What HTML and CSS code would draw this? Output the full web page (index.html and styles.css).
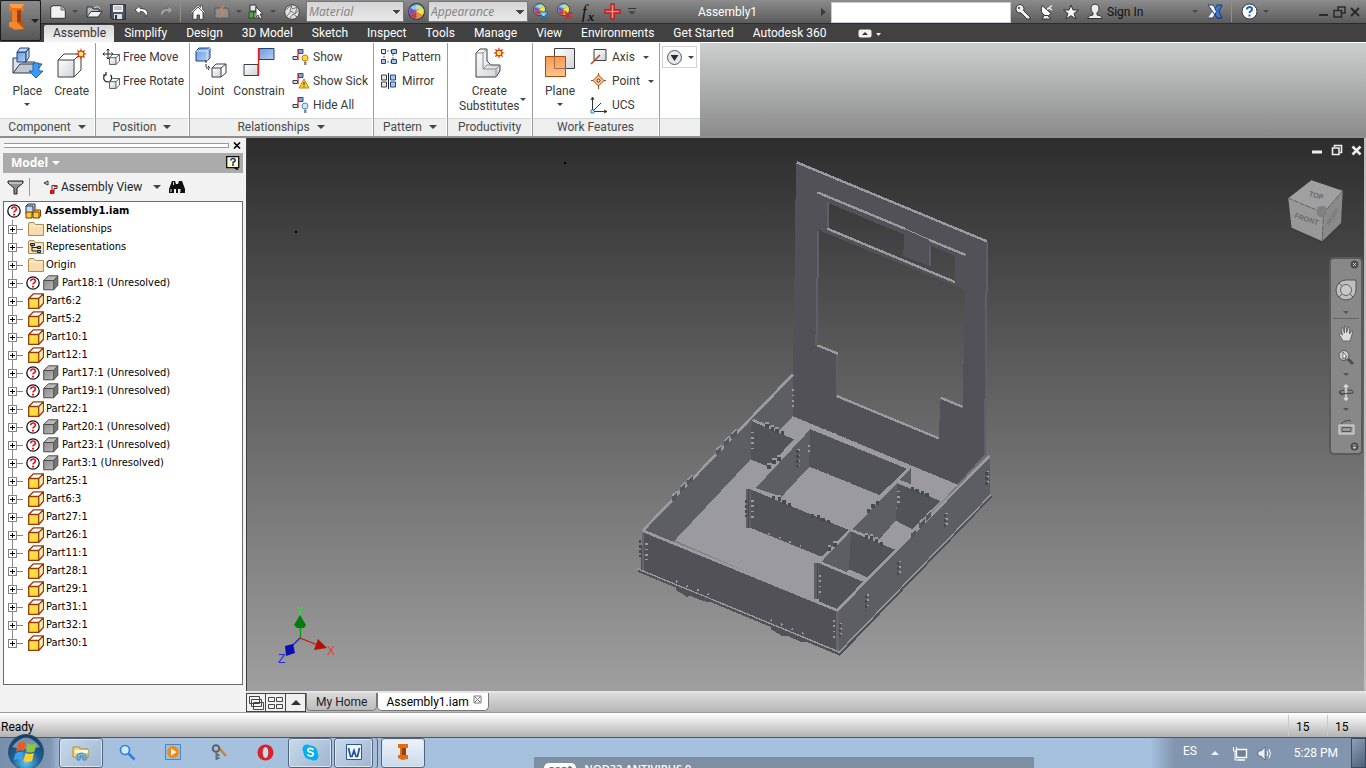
FILE: index.html
```html
<!DOCTYPE html>
<html lang="en">
<head>
<meta charset="utf-8">
<title>Assembly1</title>
<link rel="stylesheet" href="styles.css">
</head>
<body>
<svg class="defs" aria-hidden="true">
  <defs>
    <linearGradient id="gGold" x1="0" y1="0" x2="1" y2="1"><stop offset="0" stop-color="#ffe95c"/><stop offset="1" stop-color="#fbd226"/></linearGradient>
    <linearGradient id="gGrey" x1="0" y1="0" x2="1" y2="1"><stop offset="0" stop-color="#8f8f8f"/><stop offset="1" stop-color="#b5b5b5"/></linearGradient>
    <linearGradient id="gBlue" x1="0" y1="0" x2="1" y2="1"><stop offset="0" stop-color="#6c9bdc"/><stop offset="1" stop-color="#b4cff2"/></linearGradient>
    <linearGradient id="gPale" x1="0" y1="0" x2="1" y2="1"><stop offset="0" stop-color="#ffffff"/><stop offset="1" stop-color="#cfd3d8"/></linearGradient>
    <linearGradient id="gOrange" x1="0" y1="0" x2="0" y2="1"><stop offset="0" stop-color="#f79a55"/><stop offset="1" stop-color="#fbc48c"/></linearGradient>
    <symbol id="part" viewBox="0 0 16 16"><path d="M.7 5.500h10v10H.7z" fill="url(#gGold)"/><path d="M.7 5.500 5.500.8h10l-4.800 4.700z" fill="#fff"/><path d="m10.700 5.500 4.800-4.700v9.500l-4.800 5.200z" fill="#fbeeb4"/><path d="M.7 5.500h10v10H.7zL5.500.8h10v9.500l-4.800 5.200M10.700 5.500 15.500.8" fill="none" stroke="#963b08" stroke-width="1.300" stroke-linejoin="round"/></symbol>
    <symbol id="lost" viewBox="0 0 16 16"><path d="M.7 5.500h10v9.300H.7z" fill="url(#gGrey)"/><path d="M.7 5.500 5.500.8h9.300l-4.100 4.700z" fill="#b9b9b9"/><path d="m10.700 5.500 4.100-4.700v9.500l-4.100 4.500z" fill="#777"/><path d="M.7 5.500 5.500.8h9.300v9.500l-4.100 4.500H.7zh10v9.300m0-9.300 4.100-4.700" fill="none" stroke="#4b4b4b"/></symbol>
    <symbol id="query" viewBox="0 0 14 14"><circle cx="7" cy="7" r="6.200" fill="#fff" stroke="#111" stroke-width="1.300"/><path d="M4.600 5.200Q5 3 7.100 3t2.300 2Q9.400 6.300 8 7 7 7.500 7 8.600" fill="none" stroke="#e8131b" stroke-width="1.700"/><path d="M6 9.800h2v1.800H6z" fill="#e8131b"/></symbol>
    <symbol id="folder" viewBox="0 0 16 14"><path d="M.5 13.500V2Q.5.500 2 .500h4l1.500 2h8v11z" fill="#f6dcae" stroke="#b08a55"/><path d="M1.500 4h13" stroke="#fff3da"/></symbol>
    <symbol id="wheel" viewBox="0 0 18 18"><circle cx="9" cy="9" r="8.300" fill="#ddd" stroke="#26324a" stroke-width="1.200"/><path d="M9 9V1.500A7.500 7.500 0 0 1 15.500 5.200z" fill="#8cc63f"/><path d="M9 9l6.500-3.800a7.500 7.500 0 0 1 0 7.600z" fill="#f5e63c"/><path d="M9 9l6.500 3.800A7.500 7.500 0 0 1 9 16.500z" fill="#f08a2c"/><path d="M9 9v7.500a7.500 7.500 0 0 1-6.500-3.700z" fill="#d8342e"/><path d="M9 9l-6.500 3.800a7.500 7.500 0 0 1 0-7.600z" fill="#7a4fb5"/><path d="M9 9 2.500 5.200A7.500 7.500 0 0 1 9 1.500z" fill="#3f8fd8"/><path d="M3 5q6-5 12 0-2 2-6 2T3 5z" fill="#fff" opacity=".5"/></symbol>
    <symbol id="cube" viewBox="0 0 12 12"><path d="M.6 4h7v7.400h-7z" fill="url(#gPale)"/><path d="M.6 4 3.700.6h7.700v7.200L7.600 11.400h-7zh7v7.400M7.600 4 11.400.6" fill="none" stroke="#4a5058"/></symbol>
    <symbol id="rel" viewBox="0 0 16 16"><path d="M6.500 1.500H11v4H6.500z" fill="#7fa6dd" stroke="#274a86"/><path d="M1 8.500h4.500v3H1z" fill="#dde1e6" stroke="#333c4a"/><path d="M6 1v11" stroke="#e22" stroke-width="1.300"/></symbol>
    <symbol id="burst" viewBox="0 0 12 12"><path d="m6 0 1 3 3-1-1 3 3 1-3 1 1 3-3-1-1 3-1-3-3 1 1-3-3-1 3-1-1-3 3 1z" fill="#d2401a"/><circle cx="6" cy="6" r="2.300" fill="#ffee6a"/></symbol>
    <g id="tooth"><path d="M0 0h10v18H0z" fill="#494a4e"/><path d="M0 0h10v6H0z" fill="#9b9a9f"/></g>
    <g id="bump"><path d="M0 8 16-6v20L4 26H0z" fill="#54555a"/><path d="m-2 8 16-14h6L5 10z" fill="#9b9a9f"/></g>
  </defs>
</svg>

<div class="app">
  <header class="head">
    <button class="app-btn" aria-label="Application menu">
      <svg width="17" height="26" viewBox="0 0 17 26"><path d="M1 0h15v7h-3v11h3v7l-9 1-6-3v-5h3V7H1z" fill="#e9731d"/><path d="M1 0h15l-3 4H4z" fill="#f8a04b"/><path d="M9 6h4v12H9z" fill="#a23c12"/><path d="M1 18h8l7 7H7l-6-3z" fill="#f08a2c"/><path d="M4 7h5v11H4z" fill="#ef7d24"/><path d="m9 18 7 0v7z" fill="#c2500f"/></svg>
      <span class="tri big"></span>
    </button>
    <div class="head-rows">
      <div class="title">
        <button class="ic w24" aria-label="New"><svg width="16" height="14" viewBox="0 0 16 14"><path d="M.7 13.300V2L3 .700h8.500l3.800 4v8.600z" fill="#f2f2f2" stroke="#333"/><path d="M11 1v4h4" fill="#bbb" stroke="#666"/></svg></button>
        <button class="ic w10" aria-label="New options"><span class="tri"></span></button>
        <button class="ic w28" aria-label="Open"><svg width="17" height="13" viewBox="0 0 17 13"><path d="M1 12V2h5l1 2h6v3" fill="#b9bec4" stroke="#333"/><path d="M1 12 5 6.500h11L12 12z" fill="#eef0f2" stroke="#333"/><path d="M8 3q4-3 6 1" fill="none" stroke="#ddd"/></svg></button>
        <button class="ic w20" aria-label="Save"><svg width="16" height="16" viewBox="0 0 16 16"><path d="M.7.700h14.600v14.600H2L.7 14z" fill="#4b5563" stroke="#222a35"/><path d="M3 1h10v7H3z" fill="#f5f5f5"/><path d="M4 3h8M4 5h8" stroke="#999"/><path d="M4 10h8v5H4z" fill="#dcdfe3"/><path d="M5 11h2v4H5z" fill="#333"/></svg></button>
        <button class="ic w28" aria-label="Undo"><svg width="16" height="13" viewBox="0 0 16 13"><path d="M6 .8 1 5l5 4.200V6.500q5-.7 6 5.500 5-8-6-8.600z" fill="#fff" stroke="#333" stroke-width=".8"/></svg></button>
        <button class="ic w20" aria-label="Redo"><svg width="16" height="13" viewBox="0 0 16 13"><path d="m10 .8 5 4.200-5 4.200V6.500q-5-.7-6 5.500-5-8 6-8.600z" fill="#a2a2a2" stroke="#666" stroke-width=".8"/></svg></button>
        <span class="w10 vsep"></span>
        <button class="ic w24" aria-label="Home"><svg width="16" height="16" viewBox="0 0 16 16"><path d="M3 8v7.300h4V11h2.500v4.300H13V8L8 3z" fill="#f7f7f7" stroke="#333" stroke-width=".8"/><path d="m.8 8.300 7.200-7 2.500 2.300V1.500h2v4l2.700 2.700-1 1L8 3 1.800 9.300z" fill="#fff" stroke="#333" stroke-width=".7"/></svg></button>
        <button class="ic w24" aria-label="Update"><svg width="16" height="14" viewBox="0 0 16 14"><path d="M1 3h12l2 3v7H1z" fill="#8d8d8d" stroke="#5b5b5b"/><path d="m9 0-6 7h5l-3 7 8-9H8l3-5z" fill="#b58a66"/></svg></button>
        <button class="ic w10" aria-label="Update options"><span class="tri"></span></button>
        <button class="ic w24" aria-label="Select"><svg width="16" height="16" viewBox="0 0 16 16"><path d="M2 1h6v6H2z" fill="#e6e8ea" stroke="#333"/><path d="M1 8h5v6H1z" fill="#4fae3c" stroke="#1d5a18"/><path d="M6 8h5v6H6z" fill="#d5d8db" stroke="#333"/><path d="m8 3 7 7h-3l2 4-2 1-2-4-2 2z" fill="#fff" stroke="#222" stroke-width=".8"/></svg></button>
        <button class="ic w10" aria-label="Select options"><span class="tri"></span></button>
        <button class="ic w28" aria-label="Material browser"><svg width="16" height="16" viewBox="0 0 16 16"><circle cx="8" cy="8" r="7.300" fill="#e2e2e2" stroke="#444"/><path d="m2 6 4-4 3 3 4-2M3 12l4-5 4 3 3-3M6 14l3-4 4 3M8 1l-2 6M11 10l2-6" fill="none" stroke="#777"/></svg></button>
        <select class="combo" aria-label="Material"><option>Material</option></select>
        <button class="ic w24" aria-label="Appearance browser"><svg width="17" height="17"><use href="#wheel"/></svg></button>
        <select class="combo wide" aria-label="Appearance"><option>Appearance</option></select>
        <button class="ic w24" aria-label="Adjust"><svg width="17" height="17" viewBox="0 0 17 17"><use href="#wheel" width="13" height="13" x="1" y="0"/><path d="M7 9h9l-3.500 4.500h-2zM8 16h7" fill="#8fd4fa" stroke="#0f6aa5"/></svg></button>
        <button class="ic w24" aria-label="Clear appearance"><svg width="17" height="17" viewBox="0 0 17 17"><use href="#wheel" width="13" height="13" x="1" y="0"/><path d="m9 9 7 7m0-7-7 7" stroke="#e02020" stroke-width="1.600"/></svg></button>
        <button class="ic w24 fx" aria-label="Parameters"><i>f</i><sub>x</sub></button>
        <button class="ic w24" aria-label="Measure"><svg width="17" height="17" viewBox="0 0 17 17"><path d="M7 1h3v6h6v3h-6v6H7v-6H1V7h6z" fill="#ff8a80" stroke="#c01818" stroke-width="1.300"/></svg></button>
        <button class="ic w16 more" aria-label="Customize"><span class="bar"></span><span class="tri big"></span></button>
        <h1>Assembly1</h1>
        <button class="ic w16" aria-label="Expand search"><span class="tri-r"></span></button>
        <input class="search" type="text" aria-label="Search">
        <button class="ic w24" aria-label="Key"><svg width="16" height="16" viewBox="0 0 16 16"><path d="M1 5a4 4 0 1 1 7.500 1.500L15 13v2h-3L6 9Q1 9 1 5z" fill="#eee" stroke="#333"/><circle cx="4" cy="4" r="1" fill="#333"/></svg></button>
        <button class="ic w24" aria-label="Communication"><svg width="14" height="16" viewBox="0 0 14 16"><path d="m7 11 4 4H2l3-5z" fill="#eee" stroke="#333"/><path d="M2 1.500Q-.5 9 5 11.500q4 1 6-2z" fill="#fff" stroke="#333"/><path d="m7 5.500 5-4M9 4l3 2" stroke="#eee" stroke-width="1.500"/></svg></button>
        <button class="ic w24" aria-label="Favorites"><svg width="16" height="16" viewBox="0 0 16 16"><path d="m8 1 2 5h5.500L11 9.500l2 5.500-5-3.300L3 15l2-5.500L.5 6H6z" fill="#f6f6f6" stroke="#333"/></svg></button>
        <button class="ic w24" aria-label="Account"><svg width="16" height="17" viewBox="0 0 16 17"><path d="M1 15.500q0-3 5-3.500V10Q3.500 8 4 4q1-3 4-3t4 3q.5 4-2 6v2q5 .5 5 3.500z" fill="#ececec" stroke="#333"/></svg></button>
        <button class="sign">Sign In</button>
        <button class="ic w16" aria-label="Sign in options"><span class="tri"></span></button>
        <button class="ic w24" aria-label="Exchange"><svg width="16" height="15" viewBox="0 0 16 15"><path d="M15 1h-5L1 14h5z" fill="#eef4ff"/><path d="M1 1h5l9 13h-5z" fill="#eef4ff" stroke="#1d3f7a"/><path d="M15 1h-5L8 5l1.500 2.500L8 10l2 4h5l-3-6.500z" fill="#3c78c8" stroke="#16386e"/><path d="M1 14h5l2-4" fill="none" stroke="#1d3f7a"/></svg></button>
        <span class="w10 vsep"></span>
        <button class="ic w24" aria-label="Help"><svg width="17" height="17" viewBox="0 0 17 17"><circle cx="8.500" cy="8.500" r="7.500" fill="#fff" stroke="#333"/><path d="M6 6.500Q6 4 8.500 4t2.500 2.200Q11 7.500 9.500 8.300q-1 .7-1 1.700" fill="none" stroke="#1765c0" stroke-width="2"/><path d="M7.500 11.500h2v2h-2z" fill="#1765c0"/></svg></button>
        <button class="ic w10" aria-label="Help options"><span class="tri"></span></button>
        <span class="gap44"></span>
        <button class="ic w16" aria-label="Minimize"><svg width="11" height="12"><path d="M1 9h9" stroke="#2a2a2a" stroke-width="2"/></svg></button>
        <button class="ic w16" aria-label="Restore"><svg width="13" height="12" viewBox="0 0 13 12"><path d="M5 4V1h7v6H9M1 4.500h7.500V11H1z" fill="none" stroke="#2a2a2a" stroke-width="1.500"/></svg></button>
        <button class="ic w16" aria-label="Close"><svg width="10" height="10"><path d="m1 1 8 8m0-8L1 9" stroke="#2a2a2a" stroke-width="2"/></svg></button>
      </div>
      <nav class="tabs">
        <a class="on" href="#">Assemble</a><a href="#">Simplify</a><a href="#">Design</a><a href="#">3D Model</a><a href="#">Sketch</a><a href="#">Inspect</a><a href="#">Tools</a><a href="#">Manage</a><a href="#">View</a><a href="#">Environments</a><a href="#">Get Started</a><a href="#">Autodesk 360</a>
        <button class="mini" aria-label="Minimize ribbon"><svg width="24" height="9" viewBox="0 0 24 9"><rect x=".5" y=".5" width="13" height="8" rx="2" fill="#f2f2f2"/><path d="M4 6h6L7 3z" fill="#333"/><path d="M18 4h5l-2.500 3z" fill="#eee"/></svg></button>
      </nav>
    </div>
  </header>

  <section class="ribbon" aria-label="Ribbon">
    <div class="panel p-comp">
      <div class="body">
        <button class="big"><svg width="32" height="32" viewBox="0 0 32 32"><path d="M2 26V11h8l2 4h12v3" fill="#dfe2e6" stroke="#28394f"/><path d="M2 26 9 17h22l-7 9z" fill="#c3c7cc" stroke="#28394f"/><path d="M6 5h9v10H6z" fill="url(#gBlue)" stroke="#1f4580"/><path d="m6 5 3-4h9l-3 4zM15 5l3-4v9l-3 5z" fill="#c5d9f3" stroke="#1f4580"/><path d="M22 16h6v8h4l-7 7-7-7h4z" fill="#3b9af5" stroke="#1466b8"/></svg><span>Place</span><span class="tri dark"></span></button>
        <button class="big"><svg width="32" height="32" viewBox="0 0 32 32"><path d="M2 13h16v17H2z" fill="url(#gPale)"/><path d="M2 13 8 7h17v16l-7 7H2zh16v17m0-17 6-6" fill="none" stroke="#3a3f45" stroke-linejoin="round"/><use href="#burst" x="19" y="1" width="12" height="12"/></svg><span>Create</span></button>
      </div>
      <footer>Component<span class="tri big dark"></span></footer>
    </div>
    <div class="panel p-pos">
      <div class="body col">
        <button class="row"><svg width="18" height="18" viewBox="0 0 18 18"><path d="M6 1v10M1 6h10M4.500 2.500 6 1l1.500 1.500M4.500 9.500 6 11l1.500-1.500M2.500 4.500 1 6l1.500 1.500M9.500 4.500 11 6 9.500 7.500" fill="none" stroke="#222"/><use href="#cube" x="7" y="6" width="11" height="11"/></svg>Free Move</button>
        <button class="row"><svg width="18" height="18" viewBox="0 0 18 18"><path d="M3.500 2.500A4 4 0 1 0 8.500 3M4 0v3H1" fill="none" stroke="#222" stroke-width="1.200"/><use href="#cube" x="7" y="6" width="11" height="11"/></svg>Free Rotate</button>
      </div>
      <footer>Position<span class="tri big dark"></span></footer>
    </div>
    <div class="panel p-rel">
      <div class="body">
        <button class="big w42"><svg width="32" height="32" viewBox="0 0 32 32"><path d="M1 4 4 1h11v10l-3 3H1z" fill="url(#gBlue)" stroke="#1f4580"/><path d="M1 4h11v10m0-10 3-3" fill="none" stroke="#d6e5fa"/><path d="M11 13v8h4m-2-2 2 2-2 2" fill="none" stroke="#222" stroke-dasharray="3 1"/><path d="M17 21h9v9h-9z" fill="url(#gPale)"/><path d="m17 21 4-4h10v9l-5 4h-9zh9v9m0-9 5-4" fill="none" stroke="#3a3f45"/></svg><span>Joint</span></button>
        <button class="big w54"><svg width="32" height="32" viewBox="0 0 32 32"><path d="M16 1.500h15v11H16z" fill="url(#gBlue)" stroke="#1f4580"/><path d="M1 17.500h14v11H1z" fill="url(#gPale)" stroke="#3a3f45"/><path d="M15.500 1v28" stroke="#e81c1c" stroke-width="1.400"/></svg><span>Constrain</span></button>
        <div class="col">
          <button class="row"><svg width="18" height="18" viewBox="0 0 18 18"><use href="#rel" width="16" height="16"/><circle cx="13" cy="10" r="3" fill="#ffd83a" stroke="#c77a10"/><path d="M12 13.500h2.500V17H12z" fill="#888"/></svg>Show</button>
          <button class="row"><svg width="18" height="18" viewBox="0 0 18 18"><use href="#rel" width="16" height="16"/><path d="m12 7 5 9H7z" fill="#ffd21c" stroke="#c7820a"/><path d="M12 10v3m0 1v1" stroke="#222"/></svg>Show Sick</button>
          <button class="row"><svg width="18" height="18" viewBox="0 0 18 18"><use href="#rel" width="16" height="16"/><circle cx="13" cy="10" r="3" fill="#cfe6fa" stroke="#4b8ac4"/><path d="M12 13.500h2.500V17H12z" fill="#888"/></svg>Hide All</button>
        </div>
      </div>
      <footer>Relationships<span class="tri big dark"></span></footer>
    </div>
    <div class="panel p-pat">
      <div class="body col">
        <button class="row"><svg width="18" height="18" viewBox="0 0 18 18"><path d="M4 3h9v11H4z" fill="none" stroke="#666" stroke-dasharray="2 1"/><path d="M1.500 1.500h4v4h-4z" fill="#eee" stroke="#28394f"/><path d="M11.500 1.500h5v4h-5zM1.500 11.500h4v4h-4zM11.500 11.500h5v4h-5z" fill="#a9c6ee" stroke="#1f4580"/></svg>Pattern</button>
        <button class="row"><svg width="18" height="18" viewBox="0 0 18 18"><path d="M1.500 3h5v5h-5zM1.500 10h5v5h-5z" fill="#e6e8ea" stroke="#3a3f45"/><path d="M10.500 3h5v5h-5zM10.500 10h5v5h-5z" fill="#a9c6ee" stroke="#1f4580"/><path d="M8.500 1v16" stroke="#222"/></svg>Mirror</button>
      </div>
      <footer>Pattern<span class="tri big dark"></span></footer>
    </div>
    <div class="panel p-prod">
      <div class="body">
        <button class="big"><svg width="32" height="32" viewBox="0 0 32 32"><path d="M3 6 7 2h7v12l4 4h9v6l-4 6H3z" fill="url(#gPale)" stroke="#3a3f45"/><path d="M3 6h7v16h13v8M10 6l4-4M10 22l4-4h4M23 22l4-4" fill="none" stroke="#8b9096"/><use href="#burst" x="20" y="0" width="12" height="12"/></svg><span>Create<br>Substitutes</span></button>
        <span class="tri dark side"></span>
      </div>
      <footer>Productivity</footer>
    </div>
    <div class="panel p-work">
      <div class="body">
        <button class="big w54"><svg width="32" height="32" viewBox="0 0 32 32"><path d="M10.500 1.500h20v20h-20z" fill="url(#gPale)" stroke="#3a3f45"/><path d="M1.500 9.500h20v20h-20z" fill="url(#gOrange)" stroke="#a8480c"/><path d="M10.500 9.500v12h11" fill="none" stroke="#a3704a"/></svg><span>Plane</span><span class="tri dark"></span></button>
        <div class="col">
          <button class="row"><svg width="18" height="18" viewBox="0 0 18 18"><path d="M4 1.500h12v11H4z" fill="url(#gPale)" stroke="#3a3f45"/><path d="m1 16 9-9" stroke="#a8480c" stroke-width="1.500"/></svg>Axis<span class="tri dark"></span></button>
          <button class="row"><svg width="18" height="18" viewBox="0 0 18 18"><path d="M8.500 1v16M1 8.500h15" stroke="#a8480c"/><path d="m8.500 3 5.500 5.500L8.500 14 3 8.500z" fill="#fbc48c" stroke="#a8480c"/><circle cx="8.500" cy="8.500" r="1.500" fill="#fff" stroke="#333"/></svg>Point<span class="tri dark"></span></button>
          <button class="row"><svg width="18" height="18" viewBox="0 0 18 18"><path d="M2.500 2v13.500H17M2.500 15.500 11 7M1 4l1.500-3L4 4M14 14l3 1.500-3 1.500" fill="none" stroke="#333"/><path d="M1 14h3v3H1z" fill="#fff" stroke="#1b84c7"/></svg>UCS</button>
        </div>
      </div>
      <footer>Work Features</footer>
    </div>
    <div class="panel p-last">
      <div class="body"><button class="drop" aria-label="Show panels"><svg width="17" height="17" viewBox="0 0 17 17"><circle cx="8.500" cy="8.500" r="7" fill="#e6e8ea" stroke="#555"/><path d="M4.500 6h8l-4 6z" fill="#222a35"/></svg><span class="tri dark"></span></button></div>
      <footer></footer>
    </div>
  </section>

  <main class="work">
    <aside class="browser">
      <div class="grip"><span></span><button aria-label="Close browser"><svg width="8" height="7"><path d="m1 .5 6 6m0-6-6 6" stroke="#000" stroke-width="1.600"/></svg></button></div>
      <div class="bhead"><button class="model">Model<span class="tri big white"></span></button><button class="bhelp" aria-label="Help"><svg width="14" height="14" viewBox="0 0 14 14"><path d="M.7.700h12v11H10l2 2-4-2H.7z" fill="#ffffc6" stroke="#111" stroke-width="1.300"/><path d="M4.500 4.500Q5 2.500 7 2.500t2.200 2Q9 5.500 7 6.500v1.300M6 9h2" fill="none" stroke="#14308c" stroke-width="1.500"/></svg></button></div>
      <div class="btools">
        <button aria-label="Filter"><svg width="17" height="15" viewBox="0 0 17 15"><path d="M1 1h15v2l-6 5v6H7V8L1 3z" fill="#8f8f8f" stroke="#222"/><path d="M2 3h13" stroke="#eee"/></svg></button>
        <span class="bsep"></span>
        <button class="view"><svg width="17" height="15" viewBox="0 0 17 15"><path d="M6 1 2 3l4 2z" fill="#ddd" stroke="#333"/><path d="M10 5.500h5v3h-3v5H8.500v-3H10z" fill="#fff" stroke="#333"/><path d="M8 10h4v4H8zM12 5h3v2h-3z" fill="#d11"/></svg>Assembly View<span class="tri big dark"></span></button>
        <button aria-label="Find"><svg width="16" height="14" viewBox="0 0 16 14"><path d="M3 1h3l1 3h2l1-3h3l3 8v4h-5V9H9v4H7V9H5v4H0V9z" fill="#111"/><path d="M2 9v3M11 9v3M4.500 2v3" stroke="#ddd"/></svg></button>
      </div>
      <ul class="tree">
        <li class="root"><svg width="14" height="14"><use href="#query"/></svg><svg width="16" height="16" viewBox="0 0 16 16"><path d="M1 3h7v8H1zM1 3l2-2h7v6L8 9" fill="#c9daf0" stroke="#1b2c47"/><path d="M1 9h6v6H1zM8 9h6v6H8zM8 9l2-2h5.500v6L14 15" fill="#f8cf2c" stroke="#7d3b06"/></svg><b>Assembly1.iam</b></li>
        <li><button class="ex" aria-label="Expand"></button><svg width="16" height="14"><use href="#folder"/></svg>Relationships</li>
        <li><button class="ex" aria-label="Expand"></button><svg width="16" height="14" viewBox="0 0 16 14"><use href="#folder"/><path d="M4 5v6h5M4 7.500h5" fill="none" stroke="#222"/><path d="M2.500 3.500h4v2h-4zM9.500 6.500h3v2h-3zM9.500 10.500h3v2h-3z" fill="#7ab0e0" stroke="#123"/></svg>Representations</li>
        <li><button class="ex" aria-label="Expand"></button><svg width="16" height="14"><use href="#folder"/></svg>Origin</li>
        <li class="un"><button class="ex" aria-label="Expand"></button><svg width="14" height="14"><use href="#query"/></svg><svg width="16" height="16"><use href="#lost"/></svg>Part18:1 (Unresolved)</li>
        <li><button class="ex" aria-label="Expand"></button><svg width="16" height="16"><use href="#part"/></svg>Part6:2</li>
        <li><button class="ex" aria-label="Expand"></button><svg width="16" height="16"><use href="#part"/></svg>Part5:2</li>
        <li><button class="ex" aria-label="Expand"></button><svg width="16" height="16"><use href="#part"/></svg>Part10:1</li>
        <li><button class="ex" aria-label="Expand"></button><svg width="16" height="16"><use href="#part"/></svg>Part12:1</li>
        <li class="un"><button class="ex" aria-label="Expand"></button><svg width="14" height="14"><use href="#query"/></svg><svg width="16" height="16"><use href="#lost"/></svg>Part17:1 (Unresolved)</li>
        <li class="un"><button class="ex" aria-label="Expand"></button><svg width="14" height="14"><use href="#query"/></svg><svg width="16" height="16"><use href="#lost"/></svg>Part19:1 (Unresolved)</li>
        <li><button class="ex" aria-label="Expand"></button><svg width="16" height="16"><use href="#part"/></svg>Part22:1</li>
        <li class="un"><button class="ex" aria-label="Expand"></button><svg width="14" height="14"><use href="#query"/></svg><svg width="16" height="16"><use href="#lost"/></svg>Part20:1 (Unresolved)</li>
        <li class="un"><button class="ex" aria-label="Expand"></button><svg width="14" height="14"><use href="#query"/></svg><svg width="16" height="16"><use href="#lost"/></svg>Part23:1 (Unresolved)</li>
        <li class="un"><button class="ex" aria-label="Expand"></button><svg width="14" height="14"><use href="#query"/></svg><svg width="16" height="16"><use href="#lost"/></svg>Part3:1 (Unresolved)</li>
        <li><button class="ex" aria-label="Expand"></button><svg width="16" height="16"><use href="#part"/></svg>Part25:1</li>
        <li><button class="ex" aria-label="Expand"></button><svg width="16" height="16"><use href="#part"/></svg>Part6:3</li>
        <li><button class="ex" aria-label="Expand"></button><svg width="16" height="16"><use href="#part"/></svg>Part27:1</li>
        <li><button class="ex" aria-label="Expand"></button><svg width="16" height="16"><use href="#part"/></svg>Part26:1</li>
        <li><button class="ex" aria-label="Expand"></button><svg width="16" height="16"><use href="#part"/></svg>Part11:1</li>
        <li><button class="ex" aria-label="Expand"></button><svg width="16" height="16"><use href="#part"/></svg>Part28:1</li>
        <li><button class="ex" aria-label="Expand"></button><svg width="16" height="16"><use href="#part"/></svg>Part29:1</li>
        <li><button class="ex" aria-label="Expand"></button><svg width="16" height="16"><use href="#part"/></svg>Part31:1</li>
        <li><button class="ex" aria-label="Expand"></button><svg width="16" height="16"><use href="#part"/></svg>Part32:1</li>
        <li><button class="ex" aria-label="Expand"></button><svg width="16" height="16"><use href="#part"/></svg>Part30:1</li>
      </ul>
    </aside>

    <div class="stage">
      <div class="canvas">
        <svg class="model3d" viewBox="630 150 370 515" width="370" height="515" shape-rendering="crispEdges" role="img" aria-label="Assembly model">
          <g transform="translate(780 150) scale(.33333)">
            <path fill-rule="evenodd" fill="#525157" d="M48 37 620 273 618 420 612 915 530 1006 36 800 42 500zM115 240 112 440 108 585 172 610 172 738 476 865 482 745 548 770 555 420zM147 160 145 236 524 394 524 317z"/>
            <path fill="#525157" d="m372 250 79 33v65l-81-30z"/>
            <path fill="none" stroke="#5f6066" stroke-width="6" d="m621 276-6 640M115 242l-6 344M145 160v74M450 288v60M172 612v126"/>
            <path fill="none" stroke="#9b9a9f" stroke-width="7" d="m50 37 571 237M112 586l62 25M170 738l306 127M482 743l66 28M142 236l383 160M112 127l265 110M448 270l109 45"/>
            <path fill="none" stroke="#9b9a9f" stroke-width="3" d="m375 236 75 34"/>
          </g>
          <g transform="translate(620 360) scale(.33333)">
            <path fill="#9b9a9f" d="M158 538 392 298 516 170 1012 376 650 752z"/>
            <path fill="#5d5e63" d="M72 510 518 42V170L392 298 158 548z"/>
            <path fill="#515356" d="m395 180 130 55-80 85-53-22z"/>
            <path fill="#5d5e63" d="M570 203 403 383l82 27 83-90z"/>
            <path fill="#515356" d="m570 203 296 120-88 82-210-85zM390 385l300 123-86 82-214-87z"/>
            <path fill="#5d5e63" d="m866 325-26 35 32 12v-48zM833 368 695 508l83 30 50-58z"/>
            <path fill="#515356" d="m833 366 132 54-88 88-49-26z"/>
            <path fill="#5d5e63" d="m693 512-93 94 80 30 10-10z"/>
            <path fill="#515356" d="m693 512 137 54-88 86-55-24zM598 608l134 54-84 88-50-22z"/>
            <path fill="none" stroke="#9b9a9f" stroke-width="8" d="M516 172 1012 378M398 180l127 55M570 203 402 384M570 203l296 121M392 384l300 124M868 324 596 608M833 366l132 54M693 510l135 56M600 607l132 55"/>
            <path fill="#5f6066" d="M378 388h14v117h-14zM583 610h14v108h-14z"/><path fill="#47484c" d="M384 388h3v117h-3zM590 610h3v108h-3z"/>
            <path fill="#5d5e63" d="M652 752 1110 288V405L655 876z"/>
            <path fill="#525157" d="m66 512 586 240v124L62 628z"/>
            <path stroke="#66676d" stroke-width="7" d="M70 514v115M653 755v118"/>
            <path fill="none" stroke="#9b9a9f" stroke-width="8" d="M68 512 518 44M68 512l586 240M650 752 1109 288"/>
            <path fill="none" stroke="#515156" stroke-width="7" d="m54 632 605 251 455-474"/>
            <path fill="none" stroke="#9b9a9f" stroke-width="4" d="m52 626 606 250 455-472"/>
            <path fill="#515156" d="m168 676 104 42v8l-20-2-40-16-12 2-32-20zM452 793l110 46v8l-20-2-42-18-12 2-36-22z"/>
            <use href="#bump" x="156" y="398"/><use href="#bump" x="180" y="372"/><use href="#bump" x="202" y="350"/>
            <use href="#bump" x="288" y="260"/><use href="#bump" x="312" y="234"/><use href="#bump" x="334" y="212"/>
            <use href="#bump" x="872" y="510"/><use href="#bump" x="898" y="478"/><use href="#bump" x="918" y="456"/>
            <use href="#tooth" x="436" y="186"/><use href="#tooth" x="452" y="194"/><use href="#tooth" x="466" y="200"/><use href="#tooth" x="482" y="206"/>
            <use href="#tooth" x="455" y="402"/><use href="#tooth" x="473" y="405"/><use href="#tooth" x="487" y="414"/><use href="#tooth" x="503" y="422"/>
            <use href="#tooth" x="572" y="455"/><use href="#tooth" x="590" y="460"/><use href="#tooth" x="604" y="468"/><use href="#tooth" x="620" y="474"/>
            <use href="#tooth" x="442" y="308"/><use href="#tooth" x="457" y="294"/><use href="#tooth" x="472" y="284"/>
            <use href="#tooth" x="740" y="440"/><use href="#tooth" x="754" y="426"/><use href="#tooth" x="768" y="416"/>
            <use href="#tooth" x="624" y="556"/><use href="#tooth" x="640" y="542"/>
            <use href="#tooth" x="872" y="376"/><use href="#tooth" x="886" y="380"/><use href="#tooth" x="902" y="388"/><use href="#tooth" x="916" y="394"/>
            <use href="#tooth" x="735" y="518"/><use href="#tooth" x="750" y="522"/><use href="#tooth" x="764" y="532"/><use href="#tooth" x="780" y="540"/>
            <path fill="none" stroke="#9b9a9f" stroke-width="7" stroke-dasharray="5 11" d="M80 550v50M398 420v60M398 215v60M519 88v60M536 268v50M600 645v55M642 780v55M664 788v46M745 702v46M840 602v46M980 458v46M1105 332v46M836 392v50M568 255v30"/>
            <path fill="none" stroke="#9b9a9f" stroke-width="6" stroke-dasharray="5 29" d="m168 664 110 44M452 780l110 46M580 196l130 52M890 332l80 35M445 520l110 44M590 330l160 66"/>
            <path fill="none" stroke="#47484c" stroke-width="7" stroke-dasharray="9 6" d="M739 706v46M835 606v46M975 462v46M1100 336v46M660 792v46M60 540v50M378 420v50M533 270v50"/>
          </g>
        </svg>
        <svg class="triad" width="70" height="62" viewBox="272 604 70 62" role="img" aria-label="Axes">
          <path d="M300.500 638v-18" stroke="#0a9a14" stroke-width="1.400"/><path d="m300 615-6 10 3 3h7l2-3z" fill="#067a0c"/>
          <path d="m300 638 20 8" stroke="#c11" stroke-width="1.200"/><path d="m314 650 4-11 9 9z" fill="#b31008"/>
          <path d="m300 638-12 12" stroke="#22c" stroke-width="1.200"/><path d="m285 646 8-2 2 9-9 3z" fill="#0a0fae"/>
          <text class="ax" x="297" y="615" fill="#20e020">Y</text><text class="ax large" x="327" y="655" fill="#f03a30">X</text><text class="ax large" x="278" y="663" fill="#2428d8">Z</text>
        </svg>
        <svg class="viewcube" width="66" height="70" viewBox="46 122 200 208" role="img" aria-label="View cube">
          <path d="m70 280 98 45 62-62-20-60-130 10z" fill="#333" opacity=".35"/>
          <path d="M135 133 65 187l107 45 58-67z" fill="#a0a0a0"/><path d="m65 187 107 45-4 86-93-41z" fill="#989898"/><path d="m172 232 58-67-5 97-57 56z" fill="#8a8a8a"/>
          <path d="m65 187 107 45 58-67M172 232l-4 86" fill="none" stroke="#666" stroke-width="3" stroke-dasharray="14 5"/><path d="m152 215 18-6 12 8-1 22-14 8-16-10z" fill="#808080"/>
          <text class="face" transform="translate(126 180) rotate(16)">TOP</text><text class="face" transform="translate(82 246) rotate(18)">FRONT</text><text class="face dim" transform="translate(190 270) rotate(-58)">RIGHT</text>
        </svg>
        <div class="docctl"><button aria-label="Minimize view"><svg width="12" height="12"><path d="M1 8h10" stroke="#eee" stroke-width="3"/></svg></button><button aria-label="Restore view"><svg width="12" height="12" viewBox="0 0 12 12"><path d="M3.500 3V1.500h7v7H9M1.500 4h6.500v6.500H1.500z" fill="none" stroke="#eee" stroke-width="1.600"/></svg></button><button aria-label="Close view"><svg width="11" height="11"><path d="m1.500 1.500 8 8m0-8-8 8" stroke="#eee" stroke-width="2.500"/></svg></button></div>
        <div class="navbar">
          <button class="end" aria-label="Close navigation bar"><svg width="9" height="9"><circle cx="4.500" cy="4.500" r="4" fill="#4c4c4c"/><path d="m3 3 3 3m0-3L3 6" stroke="#ccc"/></svg></button>
          <button class="n28" aria-label="Steering wheel"><svg width="22" height="22" viewBox="0 0 22 22"><path d="M11 1h10v10A10 10 0 1 1 11 1z" fill="#bfbfbf" stroke="#555"/><circle cx="11" cy="11" r="5.500" fill="#c8c8c8" stroke="#666"/><path d="m4 4 3 3M4 18l3-3M18 18l-3-3" stroke="#666"/></svg></button>
          <span class="tri mid"></span><hr>
          <button class="n24" aria-label="Pan"><svg width="16" height="17" viewBox="0 0 16 17"><path d="M5 16 1 9l1-1 2.500 2L3 3l1.500-.5L6.500 8V1H8l.7 6.500L10.500 2l1.300.5L11.500 9 14 5.500l1 .5-3 10z" fill="#ddd" stroke="#555" stroke-width=".8"/></svg></button>
          <button class="n24" aria-label="Zoom"><svg width="16" height="17" viewBox="0 0 16 17"><circle cx="6" cy="6.500" r="5" fill="#c9ccd2" stroke="#555"/><path d="m5 3 4 5H7l1 3-2-2-1 1z" fill="#fff" stroke="#444" stroke-width=".7"/><path d="m10 10 5 5" stroke="#4e4e4e" stroke-width="3"/></svg></button>
          <span class="tri mid"></span>
          <button class="n24" aria-label="Orbit"><svg width="16" height="17" viewBox="0 0 16 17"><path d="M8 1v15M6 3l2-2 2 2M6 14l2 2 2-2" fill="none" stroke="#ddd" stroke-width="1.500"/><path d="M6 6q-9 2-2 4l11-1q2-3-5-3M2 7l1 4 4-2" fill="none" stroke="#444"/></svg></button>
          <span class="tri mid"></span>
          <button class="n24" aria-label="Look at"><svg width="17" height="17" viewBox="0 0 17 17"><path d="M1 6h15v9H1z" fill="#aaa" stroke="#ddd"/><path d="M4 8.500h9v4H4z" fill="#999" stroke="#555"/><path d="M3 5q5-5 10-3" fill="none" stroke="#444"/></svg></button>
          <button class="end low" aria-label="Navigation options"><svg width="9" height="9"><circle cx="4.500" cy="4.500" r="4" fill="#4c4c4c"/><path d="M2.500 3h4M3 5h3L4.500 7z" stroke="#ccc" fill="#ccc" stroke-width=".7"/></svg></button>
        </div>
        <span class="dot d1"></span><span class="dot d2"></span>
      </div>
      <div class="docs">
        <button class="dbtn" aria-label="Cascade"><svg width="17" height="16" viewBox="0 0 17 16"><path d="M1.500 1.500h10v7h-10zM3.500 4.500h10v7h-10zM5.500 7.500h10v7h-10z" fill="#f4f4f4" stroke="#444"/></svg></button>
        <button class="dbtn" aria-label="Arrange"><svg width="17" height="16" viewBox="0 0 17 16"><path d="M1.500 2.500h6v4h-6zM9.500 2.500h6v4h-6zM1.500 9.500h6v4h-6zM9.500 9.500h6v4h-6z" fill="#f4f4f4" stroke="#444"/></svg></button>
        <button class="dbtn" aria-label="List documents"><span class="tri-u"></span></button>
        <button class="doc home">My Home</button>
        <button class="doc cur">Assembly1.iam<svg width="9" height="9"><path d="M1 1h7v7H1zM2 2l5 5m0-5L2 7" fill="none" stroke="#777"/></svg></button>
      </div>
    </div>
  </main>

  <footer class="status"><span class="ready">Ready</span><span class="num">15</span><span class="num">15</span></footer>

  <footer class="taskbar">
    <button class="start" aria-label="Start"><svg width="36" height="36" viewBox="0 0 36 36"><defs><radialGradient id="orb" cx=".5" cy=".8" r=".8"><stop offset="0" stop-color="#5fc3ee"/><stop offset=".5" stop-color="#1e5f93"/><stop offset="1" stop-color="#143a5f"/></radialGradient></defs><circle cx="18" cy="18" r="17.500" fill="url(#orb)" stroke="#2e5674"/><path d="M4 13q14-19 28 0-14 4-28 0z" fill="#fff" opacity=".4"/><path d="M10 10q4-4 8-1l-2 8q-4-2-8 1z" fill="#ec5a24"/><path d="M19.500 9.500q4 2 9 0l-2 8q-5 2-8.500 0z" fill="#8cc63f"/><path d="M7.500 19.500q4-3 8-1l-2 8q-4-3-8 0z" fill="#3fa0e8"/><path d="M17.500 19q4 2 8.500 0l-2 8q-5 2-8.500 0z" fill="#ffcf2e"/></svg></button>
    <button class="task open" aria-label="Explorer"><svg width="18" height="17" viewBox="0 0 18 17"><path d="M1 13V3h6l1.500 2H16v9z" fill="#f3d37a" stroke="#b58a2c"/><path d="M3 6h13v3H3z" fill="#fff6cf"/><path d="M5 16v-5q4-4 9 0v5h-3v-4H8v4z" fill="#6fb9ee" stroke="#3c84bd"/></svg></button>
    <button class="task" aria-label="Search"><svg width="17" height="17" viewBox="0 0 17 17"><circle cx="6" cy="6" r="4.500" fill="#cfeaff" stroke="#2f80d8" stroke-width="1.700"/><path d="m9.500 9.500 6 6" stroke="#2f80d8" stroke-width="2.500"/></svg></button>
    <button class="task" aria-label="Media player"><svg width="16" height="16" viewBox="0 0 16 16"><path d="M.5.500h15v15H.5z" fill="#8fc3ec" stroke="#4b87ba"/><circle cx="8" cy="8" r="6" fill="#f28a17"/><path d="M6 4.500v7l5.500-3.500z" fill="#fff"/></svg></button>
    <button class="task" aria-label="Keys"><svg width="17" height="17" viewBox="0 0 17 17"><path d="m8 4 7 8" stroke="#c8862e" stroke-width="2.500"/><circle cx="5" cy="4.500" r="3.300" fill="#a6c1de" stroke="#5e6166" stroke-width="2"/><path d="M5.500 8v8M6 11h2.500M6 14h2.500" stroke="#6b6e73" stroke-width="2"/></svg></button>
    <button class="task" aria-label="Opera"><svg width="17" height="17" viewBox="0 0 17 17"><ellipse cx="8.500" cy="8.500" rx="8" ry="8" fill="#d8232a"/><ellipse cx="8.500" cy="8.500" rx="2.800" ry="5.500" fill="#c9dcf0"/></svg></button>
    <button class="task open" aria-label="Skype"><svg width="17" height="17" viewBox="0 0 17 17"><circle cx="5" cy="5" r="4.500" fill="#00aff0"/><circle cx="12" cy="12" r="4.500" fill="#00aff0"/><circle cx="8.500" cy="8.500" r="7" fill="#00aff0"/><path d="M11.500 6q-1-1.700-3.200-1.700-2.600.2-2.400 2 .2 1.400 2.700 1.800 2.800.5 2.700 2.200-.2 1.700-2.800 1.700Q6.200 12 5.500 10.200" fill="none" stroke="#fff" stroke-width="1.700"/></svg></button>
    <button class="task open word" aria-label="Word"><svg width="16" height="16" viewBox="0 0 16 16"><path d="M.5.500h15v15H.5z" fill="#f2f7fd" stroke="#2b5797"/><path d="m2.500 4 2 8.500h1.500l2-6 2 6h1.500l2-8.500" fill="none" stroke="#1d4f9e" stroke-width="1.700"/></svg></button>
    <button class="task open act" aria-label="Inventor"><svg width="14" height="16" viewBox="0 0 14 16"><path d="M2 0h10v4h-2v7h2v4l-6 1-4-2v-3h2V4H2z" fill="#e06c14"/><path d="M6 4h4v7H6z" fill="#9c3b10"/></svg></button>
    <div class="toast"><b class="eset">eset</b><span>NOD32 ANTIVIRUS 9</span></div>
    <div class="tray">
      <span class="lang">ES</span>
      <button aria-label="Show hidden icons"><span class="tri-u light"></span></button>
      <button aria-label="Network"><svg width="16" height="15" viewBox="0 0 16 15"><path d="M4.500 3.500h10v8h-10zM6 14h7" fill="#6d7f96" stroke="#fff" stroke-width="1.400"/><path d="M1.500 1v4h3V1M3 5v9h3" fill="none" stroke="#fff"/></svg></button>
      <button aria-label="Volume"><svg width="16" height="15" viewBox="0 0 16 15"><path d="M1 5h3l4-4v13l-4-4H1z" fill="#e8edf3" stroke="#4a5a6e" stroke-width=".7"/><path d="M10 5q1.500 2.500 0 5M12 3q3 4.500 0 9" fill="none" stroke="#fff"/></svg></button>
      <time>5:28 PM</time>
      <button class="desk" aria-label="Show desktop"></button>
    </div>
  </footer>
</div>
</body>
</html>
```
FILE: styles.css
```css
* { box-sizing: border-box; }
html, body { margin: 0; height: 100%; }
body { font: 12px/16px Roboto, "Open Sans", sans-serif; color: #3a3a3a; overflow: hidden; }
button { font: inherit; color: inherit; background: none; border: 0; padding: 0; display: flex; align-items: center; }
svg { display: block; flex: none; }
.defs { position: absolute; width: 0; height: 0; }
.app { display: flex; flex-direction: column; min-height: 100vh; background: #f1f2f1; }

.tri { flex: none; width: 0; height: 0; border: 3px solid transparent; border-top-color: #4a4a4a; border-bottom: 0; }
.tri.big { border-width: 4px; border-bottom: 0; }
.tri.dark { border-top-color: #444; }
.tri.white { border-top-color: #fff; }
.tri.mid { border-top-color: #666; }
.tri-r { border: 4px solid transparent; border-left: 5px solid #3c3c3c; border-right: 0; }
.tri-u { border: 5px solid transparent; border-bottom-color: #333; border-top: 0; }
.tri-u.light { border-width: 4px; border-bottom-color: #eef3f8; border-top: 0; }

/* title bar and tabs */
.head { display: flex; height: 42px; background: #414141; }
.app-btn { width: 41px; height: 41px; border: 1px solid #1b1b1b; border-radius: 2px; background: linear-gradient(#8b8b8b, #565656); flex: none; align-items: flex-start; gap: 6px; padding: 3px 0 0 7px; }
.app-btn .tri { margin-top: 15px; border-top-color: #222; }
.head-rows { flex: 1; min-width: 0; }
.title { display: flex; height: 24px; padding: 0 3px 0 5px; align-items: center; background: linear-gradient(#8c8c8c, #5b5b5b); border-bottom: 1px solid #2c2c2c; }
.ic { justify-content: center; flex: none; height: 22px; }
.w10 { width: 10px; flex: none; }
.w16 { width: 16px; }
.w20 { width: 20px; }
.w24 { width: 24px; }
.w28 { width: 28px; }
.gap44 { width: 44px; flex: none; }
.vsep { height: 20px; border-right: 1px solid #8f8f8f; margin-left: -5px; margin-right: 5px; }
.combo { width: 98px; height: 21px; flex: none; padding: 0 14px 0 2px; border: 1px solid #777; border-radius: 0; color: #828282; font: italic 12px/18px "Open Sans", sans-serif; appearance: none; background: conic-gradient(from -45deg at 50% 100%, #444 90deg, transparent 0) right 3px center / 8px 4px no-repeat, linear-gradient(#d4d4d4, #e8e8e8); }
.combo.wide { width: 100px; }
.fx { font: 18px/18px "Liberation Serif", serif; color: #111; gap: 1px; }
.fx sub { font-size: 13px; font-style: italic; font-weight: bold; line-height: 12px; align-self: flex-end; }
.more { flex-direction: column; gap: 2px; }
.bar { width: 8px; height: 1px; background: #333; }
.title h1 { flex: 1; min-width: 0; margin: 0; font: 12px/20px Roboto, sans-serif; color: #fff; text-align: center; }
.search { width: 180px; height: 21px; flex: none; border: 1px solid #c9ccd6; background: #fff; padding: 0 4px; margin-top: 1px; }
.sign { width: 80px; flex: none; color: #111; }
.tabs { display: flex; height: 18px; padding-left: 3px; color: #fff; }
.tabs a { color: inherit; text-decoration: none; padding: 0 9px 0 10px; line-height: 18px; white-space: nowrap; }
.tabs .on { color: #333; background: linear-gradient(#d6d6d6, #f4f4f4); border-radius: 2px 2px 0 0; height: 17px; line-height: 16px; margin-top: 1px; padding: 0 8px 0 9px; }
.mini { margin-left: 23px; }

/* ribbon */
.ribbon { display: flex; height: 94px; background: linear-gradient(#cdcfce, #8b8b8b); border-top: 1px solid #fff; }
.panel { display: flex; flex-direction: column; background: #fff; border-right: 1px solid #9d9f9f; padding-right: 1px; flex: none; }
.body { flex: 1; display: flex; align-items: flex-start; padding-top: 4px; }
.col { display: flex; flex-direction: column; align-items: flex-start; }
.body.col { padding-top: 2px; }
.body > .col { margin-top: -2px; }
.panel footer { height: 18px; display: flex; align-items: center; justify-content: center; gap: 7px; background: #eeefef; border-top: 1px solid #d3d5d5; color: #4a4a4a; padding-bottom: 1px; }
button.big { flex-direction: column; gap: 5px; text-align: center; line-height: 15px; }
button.big .tri { margin-top: -1px; }
.row { height: 24px; gap: 4px; white-space: nowrap; }
.row .tri { margin-left: 4px; }
.w42 { width: 42px; }
.w54 { width: 54px; }
.p-comp { width: 96px; }
.p-comp .body { padding-left: 5px; }
.p-comp button { width: 45px; }
.p-pos { width: 94px; }
.p-pos .body { padding-left: 6px; }
.p-pos .row { gap: 3px; }
.p-rel { width: 184px; }
.p-rel .body .col { margin-left: 6px; }
.p-rel .row { gap: 3px; }
.p-pat { width: 74px; }
.p-pat .body { padding-left: 6px; }
.p-prod { width: 85px; }
.p-prod .body { padding-left: 11px; }
.p-prod .side { margin-top: 51px; }
.p-work { width: 127px; }
.p-work .col { margin-left: 3px; }
.p-last { width: 40px; border-right: 0; padding: 0; }
.p-last .body { padding: 3px 2px; }
.drop { width: 35px; height: 22px; border: 1px solid #d2d2d2; gap: 5px; padding-left: 3px; }

/* model browser */
.work { flex: 1; display: flex; min-height: 0; border-top: 2px solid #8e8e8e; }
.browser { width: 246px; flex: none; display: flex; flex-direction: column; padding: 0 3px 27px; background: #f1f2f1; }
.grip { display: flex; align-items: center; height: 15px; gap: 4px; padding-left: 1px; }
.grip span { width: 225px; height: 5px; border: 1px solid #9a9a9a; border-left: 0; background: #fff; }
.bhead { display: flex; align-items: center; justify-content: space-between; width: 240px; height: 20px; background: #ababab; padding: 0 3px 0 8px; }
.model { gap: 4px; color: #fff; font: bold 12px/20px "Open Sans", sans-serif; }
.btools { display: flex; align-items: center; height: 28px; padding-left: 4px; }
.bsep { width: 1px; height: 18px; background: #999; margin: 0 12px 0 5px; }
.view { width: 127px; gap: 2px; color: #222; white-space: nowrap; }
.view .tri { margin-left: auto; margin-right: 8px; }
.tree { flex: 1; width: 240px; margin: 0; padding: 0; list-style: none; background: #fff; border: 1px solid #6a6a6a; font: 11px/18px "DejaVu Sans Condensed", "DejaVu Sans", sans-serif; color: #000; overflow: hidden; }
.tree li { height: 18px; display: flex; align-items: center; gap: 2px; padding-left: 4px; background: linear-gradient(#8c8c8c, #8c8c8c) 8px 0 / 1px 100% no-repeat; white-space: nowrap; }
.tree li:last-child { background-size: 1px 9px; }
.tree .root { background: none; padding-left: 3px; gap: 4px; }
.tree .ex { width: 9px; height: 9px; flex: none; margin-right: 9px; border: 1px solid #848484; background: linear-gradient(#000, #000) center / 5px 1px no-repeat, linear-gradient(#000, #000) center / 1px 5px no-repeat, #fff; position: relative; }
.ex::after { content: ""; position: absolute; left: 8px; top: 3px; width: 6px; height: 1px; background: #848484; }
.tree .un { gap: 3px; }
.tree .un .ex { margin-right: 6px; }

/* graphics window */
.stage { flex: 1; min-width: 0; display: flex; flex-direction: column; }
.canvas { position: relative; flex: 1; border-left: 1px solid #3c3c3c; border-right: 2px solid #bdbdbd; background: linear-gradient(#2d2d2d, #9f9f9f); overflow: hidden; }
.model3d { position: absolute; left: 383px; top: 12px; }
.triad { position: absolute; left: 25px; bottom: 25px; }
.ax { font: 10px "Liberation Sans", sans-serif; }
.ax.large { font-size: 12px; }
.viewcube { position: absolute; right: 16px; top: 38px; }
.face { font: bold 22px "Liberation Sans", sans-serif; fill: #6b6b6b; }
.face.dim { fill: #757575; font-size: 18px; }
.docctl { position: absolute; right: 2px; top: 6px; display: flex; gap: 8px; }
.navbar { position: absolute; right: 1px; top: 119px; width: 34px; height: 198px; display: flex; flex-direction: column; align-items: center; border: 2px solid #5a5a5a; border-radius: 5px; background: #888; }
.navbar .end { align-self: flex-end; margin: 1px 2px 4px; height: 9px; }
.navbar .low { margin: auto 2px 2px; }
.n28 { height: 33px; }
.n24 { height: 24px; }
.navbar .tri { margin: 5px 0 4px; border-top-color: #555; }
.n24 + .tri { margin: 4px 0; }
.navbar hr { width: 26px; margin: 0 0 2px; border: 0; border-top: 1px solid #666; }
.dot { position: absolute; width: 2px; height: 2px; background: #000; }
.d1 { left: 317px; top: 24px; }
.d2 { left: 48px; top: 93px; }
.docs { display: flex; height: 21px; border-top: 2px solid #e6e6e6; background: linear-gradient(#dcdcdc, #b6b6b6); }
.dbtn { width: 20px; height: 19px; border: 1px solid #444; border-left-width: 0; justify-content: center; background: #f1f1f1; }
.dbtn:first-child { border-left-width: 1px; }
.doc { height: 18px; color: #222; border: 1px solid #777; border-top: 0; border-radius: 0 0 5px 5px; padding: 1px 9px 0 9px; background: linear-gradient(#d9d9d9, #bdbdbd); white-space: nowrap; }
.doc.cur { background: #fff; color: #000; padding: 1px 6px 0 8px; gap: 4px; }
.doc svg { margin-bottom: 5px; }

/* status bar */
.status { display: flex; align-items: center; height: 26px; border-top: 1px solid #999; border-bottom: 1px solid #4c5863; background: linear-gradient(#fff, #b2b2b2); color: #000; }
.ready { flex: 1; padding-left: 1px; padding-top: 3px; }
.num { width: 39px; height: 21px; border-left: 1px solid #c9c9c9; padding: 4px 0 0 7px; }

/* task bar */
.taskbar { position: relative; display: flex; height: 30px; padding-left: 8px; background: linear-gradient(90deg, #7990ac, #7f96b2 50px, #a6c1de 62px, #a6c1de 1150px, #8195ae 1175px); }
.start { width: 51px; margin-top: -4px; align-items: flex-start; }
.task { width: 46px; justify-content: center; }
.task svg { margin-top: -2px; }
.task.open { width: 44px; margin-right: 1px; border: 1px solid #51657e; border-radius: 3px; box-shadow: inset 0 0 0 1px #dbe6f2; background: linear-gradient(135deg, #c8d9eb, #9fb6d0); }
.task.word { width: 39px; margin: 0 8px 0 1px; box-shadow: inset 0 0 0 1px #dbe6f2, 4px 0 0 #a9bdd4, 5px 0 0 #51657e; }
.task.act { background: linear-gradient(#edf3f9, #c9d9ea); }
.toast { position: absolute; left: 534px; width: 500px; bottom: 0; height: 11px; overflow: hidden; background: #7d8fa0; color: #fff; font: 600 11px/12px "Open Sans", sans-serif; display: flex; align-items: flex-start; gap: 8px; padding: 6px 10px 0; }
.eset { background: #fff; color: #5c6c7c; border-radius: 5px; padding: 0 4px; }
.tray { margin-left: auto; display: flex; align-items: center; color: #fff; }
.lang { margin: -4px 14px 0 0; }
.tray button { margin-right: 9px; }
.tray button:first-of-type { margin-right: 13px; }
time { margin: 0 13px 0 12px; }
.tray .desk { width: 15px; height: 30px; margin: 0; border: 1px solid #3b4b5e; background: linear-gradient(135deg, #8fa1b8, #4d6078); }
```
